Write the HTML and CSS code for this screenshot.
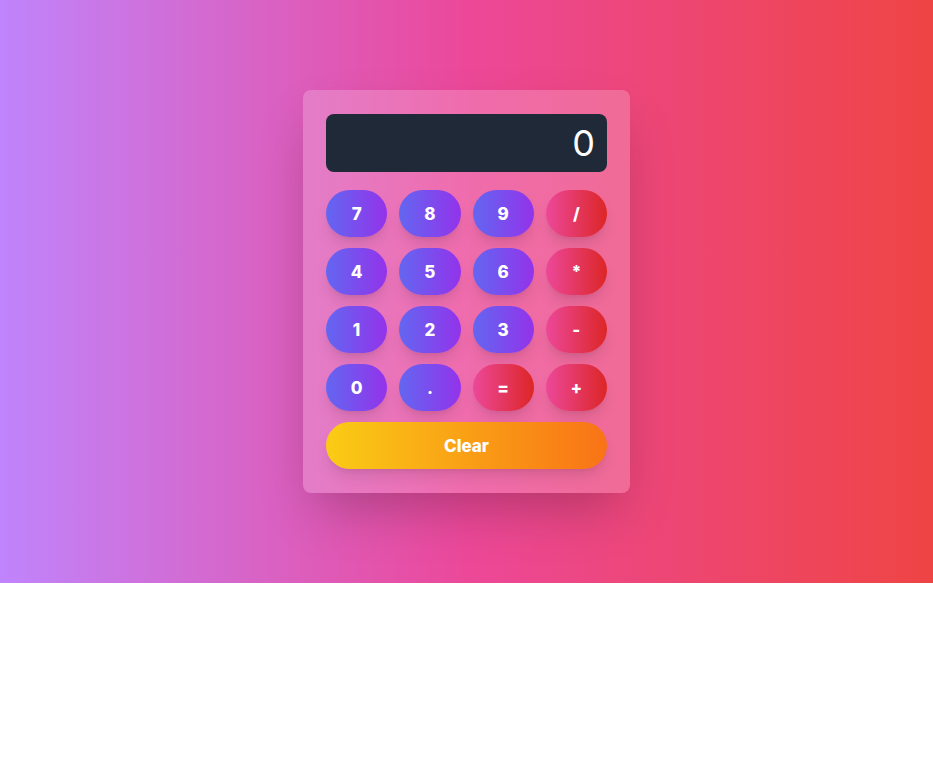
FILE: index.html
```html
<!DOCTYPE html>
<html lang="en">
<head>
<meta charset="utf-8">
<title>Calculator</title>
<link rel="stylesheet" href="styles.css">
</head>
<body>
<div class="page">
  <div class="calc">
    <div class="display">0</div>
    <div class="keys">
      <button class="key num">7</button>
      <button class="key num">8</button>
      <button class="key num">9</button>
      <button class="key op">/</button>
      <button class="key num">4</button>
      <button class="key num">5</button>
      <button class="key num">6</button>
      <button class="key op">*</button>
      <button class="key num">1</button>
      <button class="key num">2</button>
      <button class="key num">3</button>
      <button class="key op">-</button>
      <button class="key num">0</button>
      <button class="key num">.</button>
      <button class="key op">=</button>
      <button class="key op">+</button>
    </div>
    <button class="key clear">Clear</button>
  </div>
</div>
</body>
</html>
```
FILE: styles.css
```css
* { box-sizing: border-box; }
html, body { margin: 0; padding: 0; background: #fff; }
body { font-family: Inter, "Noto Sans", sans-serif; }
.page {
  height: 583px;
  display: flex;
  align-items: center;
  justify-content: center;
  background: linear-gradient(to right, #c084fc, #ec4899, #ef4444);
}
.calc {
  width: 327px;
  padding: 24px 23px;
  border-radius: 8px;
  background: rgba(255,255,255,0.2);
  box-shadow: 0 25px 50px -12px rgba(0,0,0,0.25);
  display: flex;
  flex-direction: column;
}
.display {
  height: 58px;
  background: #1f2937;
  border-radius: 8px;
  color: #fff;
  font-size: 36px;
  line-height: 40px;
  padding: 9px 12px;
  text-align: right;
  font-weight: 400;
  margin-bottom: 18px;
}
.keys {
  display: grid;
  grid-template-columns: repeat(4, 1fr);
  gap: 11px 12px;
}
.key {
  height: 47px;
  border: none;
  border-radius: 9999px;
  color: #fff;
  font-family: Inter, "Noto Sans", sans-serif;
  font-weight: 800;
  font-size: 17px;
  box-shadow: 0 10px 15px -3px rgba(0,0,0,0.1), 0 4px 6px -4px rgba(0,0,0,0.1);
  cursor: pointer;
  padding: 0;
}
.num { background: linear-gradient(to right, #6366f1, #9333ea); }
.op { background: linear-gradient(to right, #ec4899, #dc2626); }
.clear {
  margin-top: 11px;
  width: 100%;
  background: linear-gradient(to right, #facc15, #f97316);
}
```
